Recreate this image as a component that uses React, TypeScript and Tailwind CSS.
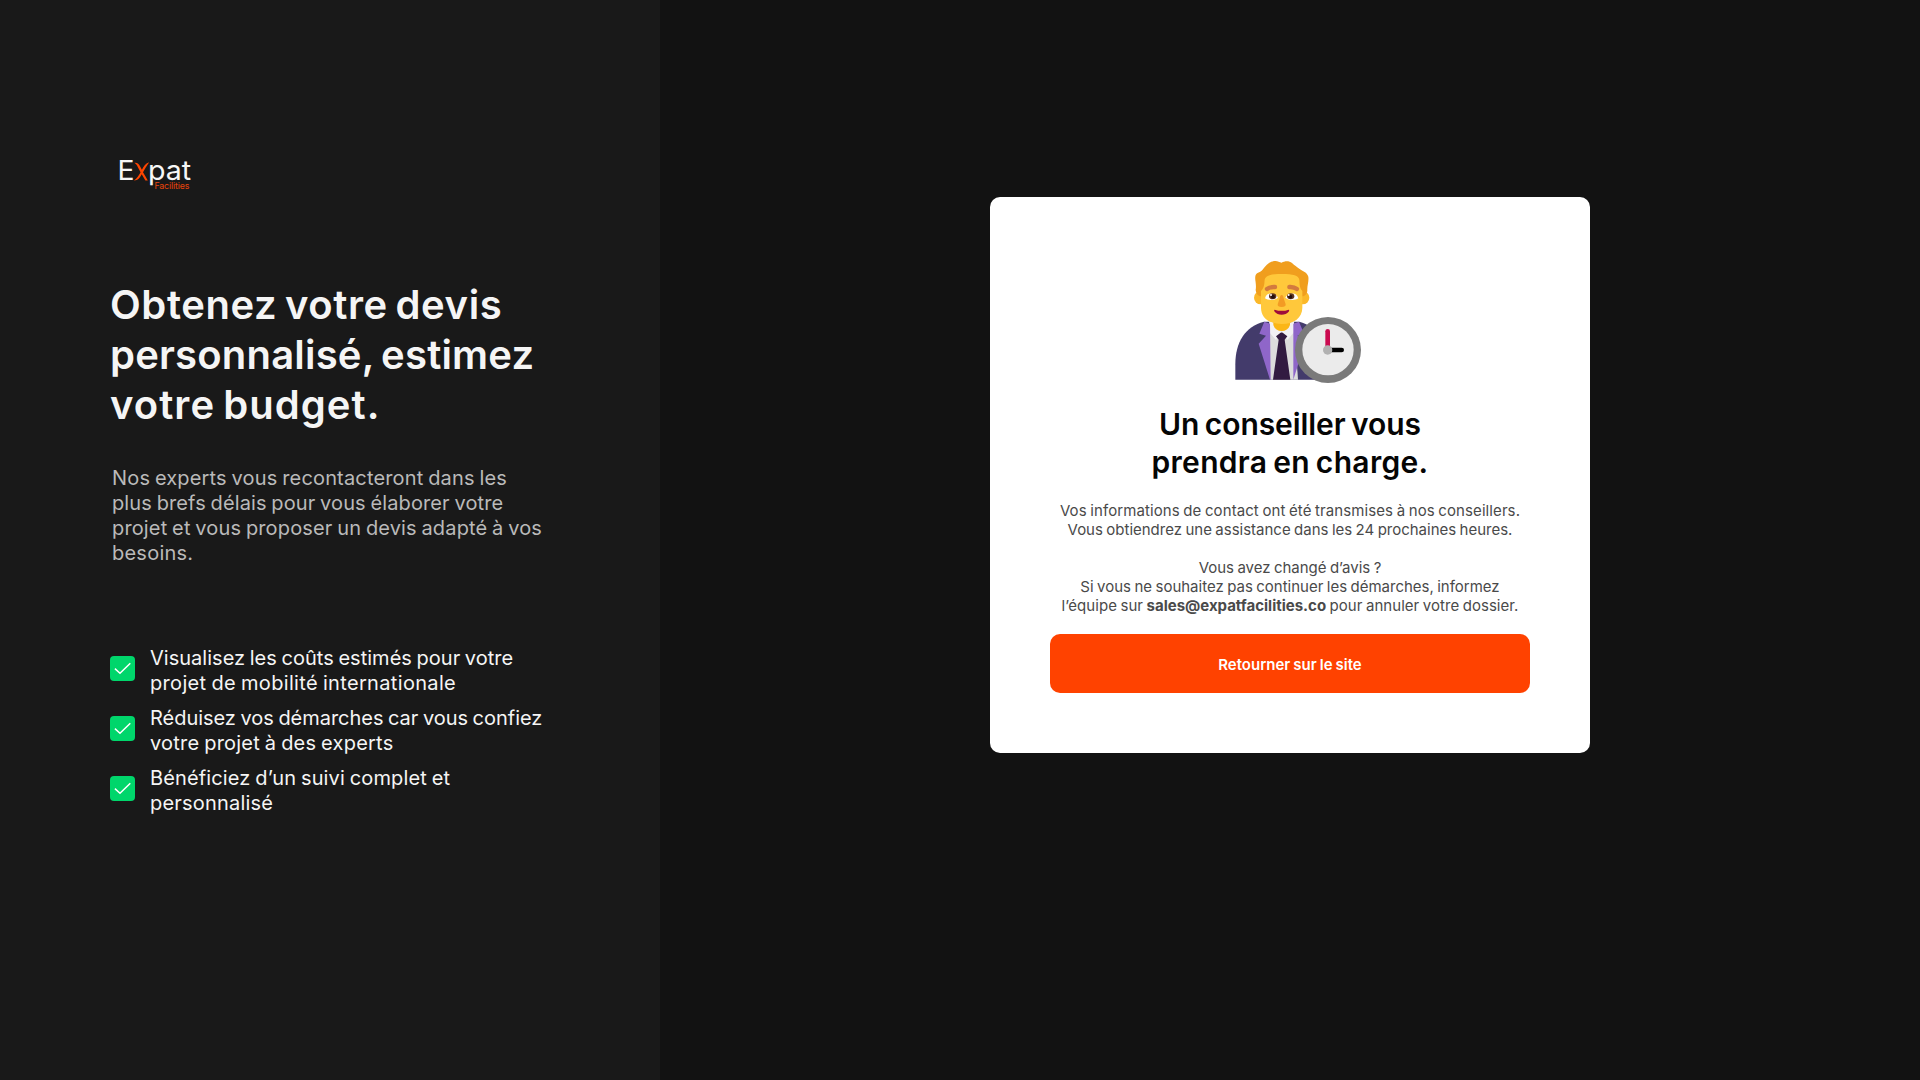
import React from "react";

function Logo() {
  return (
    <svg className="block h-[40px] w-[80px] overflow-visible" viewBox="0 0 80 40" fontFamily="Inter, sans-serif">
      <text x="0.5" y="25" fontSize="27.5" fill="#f7f7f7" textLength="17" lengthAdjust="spacingAndGlyphs">E</text>
      <path
        d="M17.4 7.8C20.4 7.4 21.8 8.8 23 11.2L24.9 14.8C26.6 11 28.8 8 32.2 7.2C29.8 10.6 27.8 13.8 26 17.2C27.6 20 29.2 22.6 30.8 25.4H28.4L24.7 19.2C22.8 22.8 20.8 25.6 17 25.4C20 23.4 21.9 20.4 23.6 17.2L21 12.4C20.1 10.4 19.2 9 17.4 7.8Z"
        fill="#ff4500"
      />
      <text x="31" y="25" fontSize="27.5" fill="#f7f7f7" textLength="43.2" lengthAdjust="spacingAndGlyphs">pat</text>
      <text x="37.4" y="33.6" fontSize="8.8" fill="#e8440a" textLength="35" lengthAdjust="spacing">Facilities</text>
    </svg>
  );
}

function Adviser() {
  return (
    <svg className="block h-[150px] w-[150px]" viewBox="0 0 450 450">
      <path d="M46 404V358C46 290 76 245 132 230H238C290 243 322 290 322 350V404Z" fill="#433b6b" />
      <path d="M148 228H222L234 404H150Z" fill="#dcdcdc" />
      <path d="M148 222L185 260L168 285L148 262ZM222 222L185 260L202 285L222 262Z" fill="#f2f1f4" />
      <path d="M133 230L150 236L152 404H150L116 296L138 272L118 266Z" fill="#8f66c9" />
      <path d="M237 230L220 236V404L254 296L232 272L252 266Z" fill="#8f66c9" />
      <path d="M178 266Q185 259 192 266L202 274L194 284L211 404H159L176 284L168 274Z" fill="#321b41" />
      <path d="M160 215H210V240C206 252 197 258 185 258S164 252 160 240Z" fill="#fbb616" />
      <circle cx="122" cy="158" r="20" fill="#fbb829" />
      <circle cx="248" cy="158" r="20" fill="#fbb829" />
      <path d="M107 135C110 116 104 106 106 94C108 82 119 84 127 75C138 60 150 48 166 48C174 48 178 52 185 53C193 48 207 46 216 54C224 62 230 65 239 72C247 78 262 82 265 95C267 111 261 121 262 136Q262 149 250 154H120Q108 149 107 135Z" fill="#f09e1e" />
      <path d="M123 150V138C134 128 133 112 134 104C137 92 150 87 185 87S236 92 238 104C239 114 238 128 247 138V188C247 218 222 237 185 237S123 218 123 188Z" fill="#ffc83b" />
      <path d="M141 132Q150 125 165 126" fill="none" stroke="#d37a3e" strokeWidth="13" strokeLinecap="round" />
      <path d="M208 126Q222 125 231 132" fill="none" stroke="#d37a3e" strokeWidth="13" strokeLinecap="round" />
      <path d="M135 160C138 149 146 145 154 146C164 146 172 151 174 158C164 167 145 167 135 160Z" fill="#fff" />
      <path d="M235 160C232 149 224 145 216 146C206 146 198 151 196 158C206 167 225 167 235 160Z" fill="#fff" />
      <ellipse cx="158" cy="154" rx="11" ry="9" fill="#5f3521" />
      <ellipse cx="212" cy="154" rx="11" ry="9" fill="#5f3521" />
      <circle cx="159" cy="155" r="6" fill="#24100e" />
      <circle cx="211" cy="155" r="6" fill="#24100e" />
      <circle cx="153" cy="150" r="3" fill="#fff" />
      <circle cx="206" cy="150" r="3" fill="#fff" />
      <path d="M185 150C189 150 190 154 191 160L197 178Q198 186 185 186T173 178L179 160C180 154 181 150 185 150Z" fill="#f39b24" />
      <path d="M164 194Q185 201 206 194C208 194 208 197 206 200C201 206 194 209 185 209S169 206 164 200C162 197 162 194 164 194Z" fill="#9e0b3b" />
      <circle cx="324" cy="315" r="99" fill="#7a7a7a" />
      <circle cx="324" cy="314" r="77" fill="#ebebeb" />
      <path d="M323 315H365" stroke="#000" strokeWidth="14" strokeLinecap="round" />
      <path d="M323 315V259" stroke="#cb0b50" strokeWidth="14" strokeLinecap="round" />
      <circle cx="323" cy="315" r="14" fill="#b1b1b1" />
    </svg>
  );
}

function Check() {
  return (
    <span className="mt-[10px] block h-[25px] w-[25px] shrink-0 rounded-[4px] bg-[#00d66b]">
      <svg className="block h-full w-full" viewBox="0 0 25 25" fill="none" stroke="#fff" strokeWidth="1.5">
        <path d="M4.9 12.6L10 17.3L20.3 7.3" />
      </svg>
    </span>
  );
}

export default function App() {
  return (
    <div className="flex h-[1080px] w-[1920px] overflow-hidden bg-[#121212] font-['Inter',sans-serif] whitespace-nowrap">
      <aside className="flex w-[660px] flex-col bg-[#191919] pt-[155px] pl-[110px]">
        <div className="pl-[7px]">
          <Logo />
        </div>
        <h1 className="mt-[85px] text-[40px] leading-[50px] font-semibold text-[#f5f5f5] [word-spacing:-3px]">
          <span className="block tracking-[0.6px]">Obtenez votre devis</span>
          <span className="block tracking-[0.2px]">personnalisé, estimez</span>
          <span className="block tracking-[1.05px]">votre budget.</span>
        </h1>
        <p className="mt-[36px] pl-[2px] text-[20px] leading-[25px] text-[#bababa] [word-spacing:-1px]">
          <span className="block tracking-[0.16px]">Nos experts vous recontacteront dans les</span>
          <span className="block tracking-[0.11px]">plus brefs délais pour vous élaborer votre</span>
          <span className="block tracking-[0.14px]">projet et vous proposer un devis adapté à vos</span>
          <span className="block tracking-[0.233px]">besoins.</span>
        </p>
        <ul className="mt-[80px] flex flex-col gap-[10px] text-[20px] leading-[25px] text-[#f5f5f5] [word-spacing:-1px]">
          <li className="flex gap-[15px]">
            <Check />
            <p>
              <span className="block tracking-[0.02px]">Visualisez les coûts estimés pour votre</span>
              <span className="block tracking-[0.335px]">projet de mobilité internationale</span>
            </p>
          </li>
          <li className="flex gap-[15px]">
            <Check />
            <p>
              <span className="block tracking-[-0.03px]">Réduisez vos démarches car vous confiez</span>
              <span className="block tracking-[0.22px]">votre projet à des experts</span>
            </p>
          </li>
          <li className="flex gap-[15px]">
            <Check />
            <p>
              <span className="block tracking-[0.14px]">Bénéficiez d’un suivi complet et</span>
              <span className="block tracking-[0.201px]">personnalisé</span>
            </p>
          </li>
        </ul>
      </aside>
      <main className="flex flex-1 items-start pt-[197px] pl-[330px]">
        <section className="flex h-[556px] w-[600px] flex-col items-center rounded-[10px] bg-white px-[60px] pt-[48px] text-center">
          <div className="pl-[10px]">
            <Adviser />
          </div>
          <h2 className="mt-[10px] text-[30px] leading-[38px] font-semibold text-[#050505] [word-spacing:-2px]">
            <span className="block tracking-[-0.077px]">Un conseiller vous</span>
            <span className="block tracking-[0.32px]">prendra en charge.</span>
          </h2>
          <p className="mt-[20px] text-[15px] leading-[19px] text-[#4a4a4a] [word-spacing:-0.75px]">
            <span className="block tracking-[0.09px]">Vos informations de contact ont été transmises à nos conseillers.</span>
            <span className="block tracking-[-0.01px]">Vous obtiendrez une assistance dans les 24 prochaines heures.</span>
          </p>
          <p className="mt-[19px] text-[15px] leading-[19px] text-[#4a4a4a] [word-spacing:-0.75px]">
            <span className="block tracking-[-0.02px]">Vous avez changé d’avis ?</span>
            <span className="block tracking-[-0.006px]">Si vous ne souhaitez pas continuer les démarches, informez</span>
            <span className="block tracking-[0.05px]">
              l’équipe sur <strong className="font-bold tracking-[-0.01px]">sales@expatfacilities.co</strong>{" "}
              <span className="tracking-[0.04px]">pour annuler votre dossier.</span>
            </span>
          </p>
          <button className="mt-[19px] h-[59px] w-[480px] shrink-0 rounded-[10px] bg-[#ff4200] pt-[3px] text-[15px] font-semibold text-white [word-spacing:-0.75px]">
            Retourner sur le site
          </button>
        </section>
      </main>
    </div>
  );
}
